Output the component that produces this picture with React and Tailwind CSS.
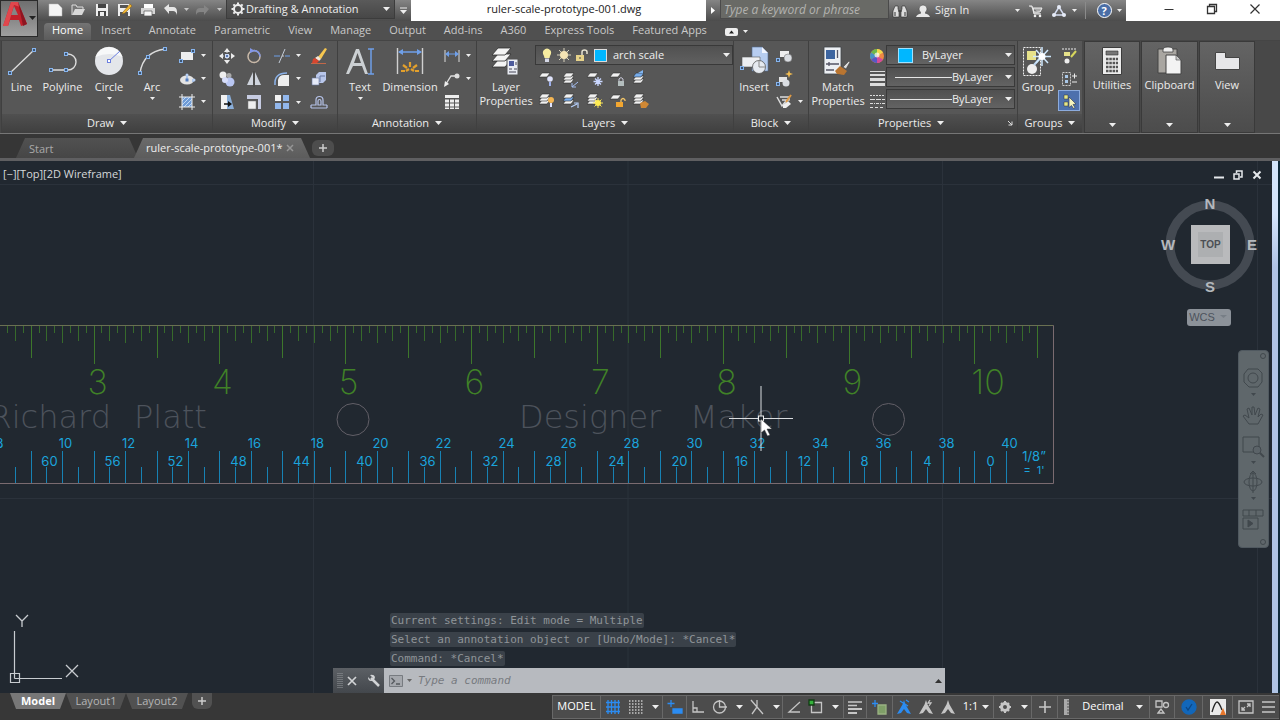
import React from "react";

const BLUE = "#6f9fe8";

function Icon({ s = 18, w, h, children, className = "" }) {
  return (
    <svg width={w || s} height={h || s} viewBox={`0 0 ${w || s} ${h || s}`} fill="none" className={`shrink-0 ${className}`} aria-hidden="true">
      {children}
    </svg>
  );
}

function Caret({ small, className = "" }) {
  return small ? (
    <svg width="5" height="3" viewBox="0 0 5 3" className={`shrink-0 ${className}`} aria-hidden="true"><path d="M0 0h5L2.500 3z" fill="#eee" /></svg>
  ) : (
    <svg width="7" height="4" viewBox="0 0 7 4" className={`shrink-0 ${className}`} aria-hidden="true"><path d="M0 0h7L3.500 4z" fill="#eee" /></svg>
  );
}

function Node({ x, y }) {
  return <rect x={x - 1.5} y={y - 1.5} width="3" height="3" fill="#3d5674" stroke="#86b4ee" />;
}

function Big({ label, children, className, caret }) {
  return (
    <button className={`flex shrink-0 flex-col items-center pt-px text-center ${className}`}>
      <Icon s={32}>{children}</Icon>
      <span className="mt-[3px] leading-[14px]">{label}</span>
      {caret && <Caret small className="mt-[3px]" />}
    </button>
  );
}

function Small({ label, caret, children, className = "" }) {
  return (
    <button aria-label={label} className={`flex h-[23px] items-center justify-center ${caret ? "gap-[5px]" : ""} ${className}`}>
      <Icon s={18}>{children}</Icon>
      {caret && <Caret small />}
    </button>
  );
}

function Panel({ title, className, children, launcher }) {
  return (
    <section className={`flex shrink-0 flex-col border-l border-[#404040] bg-[#575757] ${className}`}>
      <div className="flex h-[73px] pt-[3px]">{children}</div>
      <button className="flex h-[19px] w-full items-center justify-center gap-[6px] bg-linear-to-b from-[#505050] to-[#3f3f3f] pb-[2px] leading-4">
        {launcher && <span className="flex-1" />}
        <span>{title}</span>
        <Caret />
        {launcher && (
          <span className="flex flex-1 justify-end pr-1">
            <Icon s={6}><path d="M1 1l4 4M5 1.500V5H1.500" stroke="#ddd" /></Icon>
          </span>
        )}
      </button>
    </section>
  );
}

function Collapsed({ title, children, className }) {
  return (
    <button className={`flex h-[92px] shrink-0 flex-col items-center border border-[#3a3a3a] bg-linear-to-b from-[#646464] to-[#4c4c4c] ${className}`}>
      <Icon s={32} className="mt-[3px]">{children}</Icon>
      <span className="mt-px leading-[14px]">{title}</span>
      <Caret className="mt-auto mb-[5px]" />
    </button>
  );
}

function sheet(x, y, fill) {
  return <path d={`M${x + 3} ${y}h8l-3 4h-8z`} fill={fill || "#f2f2f2"} stroke="#2e2e2e" strokeWidth=".6" />;
}

function Stack({ top, mid, children }) {
  return (
    <>
      {sheet(1, 9)}
      {sheet(1, 6, mid)}
      {sheet(1, 3, top)}
      {children}
    </>
  );
}

function QuickAccess() {
  const items = [
    ["New", <path key="a" d="M2 3h9l4 4v8H2z" fill="#f4f4f4" stroke="#bbb" strokeWidth=".5" />],
    ["Open", <g key="a"><path d="M2 14V4h4l1 2h6v2" stroke="#ddd" fill="#777" /><path d="M2 14l3-6h10l-3 6z" fill="#d8d8d8" /></g>],
    ["Save", <g key="a"><path d="M3 3h12v12H3z" fill="#eee" /><path d="M5 3h8v4H5zM5 10h8v5H5z" fill="#444" /><path d="M7 11h4v4H7z" fill="#eee" /></g>],
    ["Save As", <g key="a"><path d="M2 3h12v12H2z" fill="#eee" /><path d="M4 4h8v3H4zM4 11h8v4H4z" fill="#555" /><path d="M7 11l7-8 2 2-7 7-3 1z" fill="#f0b632" stroke="#7a5512" strokeWidth=".5" /></g>],
    ["Plot", <g key="a"><path d="M5 3h9v4H5z" fill="#fff" /><path d="M2 7h14v6H2z" fill="#d6d6d6" /><path d="M5 10h8v5H5z" fill="#f7f7f7" stroke="#555" strokeWidth=".7" /></g>],
    ["Undo", <path key="a" d="M2 7l5-4v3h4q4 0 4 5v3q-1-4-4-4H7v3z" fill="#e6e6e6" />],
  ];
  return (
    <nav className="flex items-start pl-2">
      {items.map(([l, i]) => (
        <button key={l} aria-label={l} className="flex h-[19px] w-[23px] items-center justify-center pr-1">
          <Icon s={18}>{i}</Icon>
        </button>
      ))}
      <Caret small className="mt-2 opacity-70" />
      <button aria-label="Redo" className="flex h-[19px] w-7 items-center justify-center"><Icon s={16}><path d="M14 7L9 3v3H5q-4 0-4 5v2q1-3 4-3h4v3z" fill="#858585" /></Icon></button>
      <Caret small className="mt-2 opacity-70" />
    </nav>
  );
}

function TitleBar() {
  return (
    <header className="flex h-[21px] items-stretch bg-linear-to-b from-[#858585] to-[#4c4c4c]">
      <QuickAccess />
      <div className="ml-1 flex h-[19px] w-[169px] items-center border border-t-0 border-[#3c3c3c] bg-linear-to-b from-[#5a5a5a] to-[#474747] pr-1 pl-1">
        <Icon s={14}>
          <circle cx="7" cy="7" r="4" stroke="#eee" strokeWidth="2" />
          <path d="M7 .500v2M7 11.500v2M.500 7h2M11.500 7h2M2.400 2.400l1.400 1.400M10.200 10.200l1.400 1.400M2.400 11.600l1.400-1.400M10.200 3.800l1.400-1.400" stroke="#eee" strokeWidth="2" />
        </Icon>
        <select aria-label="Workspace" className="min-w-0 flex-1 appearance-none bg-transparent pl-px text-[#eee] outline-none">
          <option>Drafting &amp; Annotation</option>
        </select>
        <Caret />
      </div>
      <button aria-label="Customize quick access" className="flex w-4 items-center justify-center">
        <Icon w={7} h={8}><path d="M0 1h7" stroke="#eee" /><path d="M0 3h7L3.500 7z" fill="#eee" /></Icon>
      </button>
      <h1 className="flex-1 bg-white pl-[11px] text-center leading-[18px] text-[#222]">ruler-scale-prototype-001.dwg</h1>
      <button aria-label="Expand search" className="flex w-[14px] items-center justify-center"><Icon w={4} h={7}><path d="M0 0l4 3.500L0 7z" fill="#fff" /></Icon></button>
      <input aria-label="Search" placeholder="Type a keyword or phrase" className="h-[19px] w-[169px] border border-t-0 border-[#4a4a4a] bg-[#696a66] px-[3px] text-[12px] italic text-white outline-none placeholder:text-[#b3b3b0]" />
      <button aria-label="Find" className="flex w-[22px] items-center justify-center">
        <Icon s={16}><path d="M3 3h3v3l1 2v6H1V8zM10 3h3l2 5v6H9V8l1-2z" fill="#ddd" stroke="#2c2c2c" strokeWidth=".6" /><path d="M6 8h4M3 9v4M13 9v4" stroke="#333" /></Icon>
      </button>
      <button className="flex w-[104px] items-center gap-[4px] pl-1 text-[#ececec]">
        <Icon s={16}><circle cx="8" cy="6" r="4" fill="#e8e8e8" stroke="#333" strokeWidth=".5" /><path d="M1 14q1-3 5-3.500V9h4v1.500q4 .500 5 3.500z" fill="#e8e8e8" /></Icon>
        Sign In
      </button>
      <button aria-label="Account menu" className="flex w-2 items-center"><Caret small /></button>
      <button aria-label="Store" className="flex w-[26px] items-center justify-center"><Icon s={16}><path d="M1 3h3l2 8h7M5 5h9l-2 4H6z" stroke="#eee" fill="#aaa" /><circle cx="7" cy="13" r="1.300" fill="#eee" /><circle cx="12" cy="13" r="1.300" fill="#eee" /></Icon></button>
      <button aria-label="A360" className="flex w-[30px] items-center justify-center gap-[5px]"><Icon s={16}><path d="M8 4L3 12h10z" stroke="#d4dcf0" strokeWidth="1.500" /><circle cx="8" cy="4" r="2" fill="#e6ebf7" /><circle cx="3" cy="12" r="2" fill="#e6ebf7" /><circle cx="13" cy="12" r="2" fill="#e6ebf7" /></Icon><Caret small /></button>
      <span className="mx-[6px] my-[2px] w-px bg-[#8b8b8b]" />
      <button aria-label="Help" className="flex w-[34px] items-center justify-center gap-[5px]">
        <span className="flex size-[15px] items-center justify-center rounded-full border border-white bg-[#4a6ea6] text-[11px] leading-none font-bold text-white">?</span><Caret small />
      </button>
      <div className="flex w-[154px] items-center bg-white pr-1 pb-[3px] pl-[22px] text-[#333]">
        <button aria-label="Minimize" className="flex w-[43px] justify-center"><Icon s={12}><path d="M1.500 6.500h9" stroke="currentColor" /></Icon></button>
        <button aria-label="Restore" className="flex w-[43px] justify-center"><Icon s={12}><path d="M1.500 3.500h7v7h-7zM3.500 3V1.500h7v7H9" stroke="currentColor" strokeWidth="1.300" /></Icon></button>
        <button aria-label="Close" className="flex w-[43px] justify-center"><Icon s={12}><path d="M1.500 1.500l9 9M10.500 1.500l-9 9" stroke="currentColor" strokeWidth="1.200" /></Icon></button>
      </div>
    </header>
  );
}

const TABS = ["Home", "Insert", "Annotate", "Parametric", "View", "Manage", "Output", "Add-ins", "A360", "Express Tools", "Featured Apps"];

function RibbonTabs() {
  return (
    <nav className="flex h-[19px] items-end gap-[2px] pl-[6px]">
      {TABS.map((t) => (
        <button key={t} className={`flex h-[17px] items-start px-2 leading-[14px] ${t === "Home" ? "rounded-t-sm bg-linear-to-b from-[#747474] to-[#5b5b5b] text-white" : "text-[#c9c9c9]"}`}>{t}</button>
      ))}
      <button aria-label="Minimize ribbon" className="ml-2 flex h-[17px] items-center gap-[5px]">
        <Icon w={13} h={8}><rect width="13" height="8" rx="2" fill="#eee" /><path d="M4 5.500h5L6.500 2.500z" fill="#222" /></Icon><Caret small />
      </button>
    </nav>
  );
}

function DrawPanel() {
  return (
    <Panel title="Draw" className="w-[211px]">
      <Big label="Line" className="w-[39px]"><path d="M4 28L28 5" stroke="#ddd" strokeWidth="1.300" /><Node x={4} y={28} /><Node x={28} y={5} /></Big>
      <Big label="Polyline" className="w-[43px]"><path d="M4 25h17a8 8 0 0 0 0-16h-2" stroke="#ddd" strokeWidth="1.400" /><Node x={4} y={25} /><Node x={19} y={25} /><Node x={19} y={9} /></Big>
      <Big label="Circle" caret className="w-[50px]"><circle cx="16" cy="16" r="14" fill="#e4e6ea" /><path d="M2.500 12a14 14 0 0 1 27 0q-13-6-27 0z" fill="#fff" opacity=".7" /><path d="M16 16L27 6" stroke="#6b7fe0" /><rect x="14.500" y="14.500" width="3" height="3" fill="#fff" stroke="#6b7fe0" /></Big>
      <Big label="Arc" caret className="w-[36px]"><path d="M4 28Q7 7 29 4" stroke="#ddd" strokeWidth="1.400" /><Node x={4} y={28} /><Node x={12} y={12} /><Node x={29} y={4} /></Big>
      <div className="ml-1 w-[36px]">
        <Small label="Rectangle" caret className="w-full"><path d="M3 5h12v8H3z" fill="#eee" /><Node x={3} y={14} /><Node x={15} y={4} /></Small>
        <Small label="Ellipse" caret className="w-full"><ellipse cx="9" cy="10" rx="7" ry="4.500" fill="#e4e4e4" /><path d="M9 4v5M15 9v3" stroke={BLUE} /><rect x="7.500" y="8.500" width="3" height="3" fill="#547ec0" /><circle cx="9" cy="5" r="1.500" fill="#b7d0f5" /><circle cx="16" cy="10" r="1.500" fill="#b7d0f5" /></Small>
        <Small label="Hatch" caret className="w-full"><path d="M4 4h10v10H4z" fill="#6e9bd6" /><path d="M4 8l4-4M4 12l8-8M6 14l8-8M10 14l4-4" stroke="#d6e6fa" strokeWidth=".8" /><path d="M4 1v16M14 1v16M1 4h16M1 14h16" stroke="#eee" /></Small>
      </div>
    </Panel>
  );
}

function ModifyPanel() {
  return (
    <Panel title="Modify" className="w-[125px]">
      <div className="grid grid-cols-[27px_27px_40px_24px]">
        <Small label="Move"><path d="M9 1l3 4H6zM9 17l3-4H6zM1 9l4-3v6zM17 9l-4-3v6z" fill="#eee" /><path d="M9 4v10M4 9h10" stroke="#ddd" strokeDasharray="2 1" /><rect x="7.500" y="7.500" width="3" height="3" fill="#5b79b3" stroke="#cddcf7" /></Small>
        <Small label="Rotate"><circle cx="9" cy="9.500" r="6" stroke="#c9b9a8" strokeWidth="1.500" /><path d="M9 3.500a6 6 0 0 1 6 6" stroke="#7d94e8" strokeWidth="1.500" /><path d="M5 1v5l5-2z" fill="#8297e8" /></Small>
        <Small label="Trim" caret><path d="M1 9h6M12 9h5" stroke={BLUE} strokeWidth="1.200" /><path d="M6 16L12 2" stroke="#c3ccd8" /><path d="M9 9h2" stroke="#ccc" /></Small>
        <Small label="Erase"><path d="M8 10l7-9 2 1-6 10z" fill="#f6c64f" /><path d="M5 11l3-2 3 3-2 2z" fill="#f1e7da" /><path d="M3 12l2-1 4 3-2 2H2z" fill="#d8452f" /><path d="M1 16.500h15" stroke="#c26748" /></Small>
        <Small label="Copy"><circle cx="5" cy="5" r="3.500" fill="#eee" /><circle cx="11" cy="5.500" r="2.500" fill="#aaa" /><circle cx="12" cy="12" r="4.500" fill="#b9c6f2" /><circle cx="7" cy="10" r="3" fill="#d8defa" /></Small>
        <Small label="Mirror"><path d="M8 2v13H2zM10 2v13h6z" fill="#cfd4dd" /><path d="M9 1v16" stroke="#444" /></Small>
        <Small label="Fillet" caret><path d="M5 16V10q1-5 6-5h5v11z" fill="#eee" /><path d="M2 15Q1 3 14 3" stroke="#8cb3ea" strokeWidth="1.500" /></Small>
        <Small label="Explode"><path d="M6 5l3-3h7v8l-3 3H6z" fill="#b8c6ea" /><path d="M2 8h7v7H2z" fill="#e5eaf8" stroke="#66759d" strokeWidth=".6" /><path d="M10 6h5M10 6v6" stroke="#67769f" /></Small>
        <Small label="Stretch"><path d="M3 2h6v14H3z" fill="#f2f2f2" /><path d="M9 2h3l4 14H9z" fill="#8aaed8" /><path d="M6 11h5" stroke="#111" strokeWidth="1.500" /><path d="M10 8l4 3-4 3z" fill="#111" /></Small>
        <Small label="Scale"><path d="M2 2h14v14h-3V6H2z" fill="#c7cce2" /><path d="M3 8h8v8H3z" fill="#eee" stroke="#777" strokeWidth=".5" /></Small>
        <Small label="Array" caret><path d="M2 2h6v6H2z" fill="#f2f2f2" /><path d="M10 2h6v6h-6zM2 10h6v6H2zM10 10h6v6h-6z" fill="#92b7ec" /></Small>
        <Small label="Offset"><path d="M1 15h16M1 12h5V7a3.500 3.500 0 0 1 7 0v5h4M1 12v3M17 12v3M8 12V8a1 1 0 0 1 3 0v4z" stroke="#b6c3ea" strokeWidth="1.200" /></Small>
      </div>
    </Panel>
  );
}

function AnnotationPanel() {
  return (
    <Panel title="Annotation" className="w-[139px]">
      <Big label="Text" caret className="w-[44px]"><path d="M2 29L12 4h3l9 25h-3l-3-8H9l-4 8zM10 18h7L13.500 8z" fill="#ccd0d3" /><path d="M24 4h6M24 29h6M27 4v25" stroke={BLUE} strokeWidth="1.500" /></Big>
      <Big label="Dimension" className="w-[56px]"><path d="M3.500 3v26M28.500 3v26" stroke="#d0d0d0" strokeWidth="1.400" /><path d="M5 7h22" stroke={BLUE} strokeWidth="1.500" /><path d="M4 7l5-3v6zM28 7l-5-3v6z" fill={BLUE} /><path d="M7 26h4M21 26h4M9 20l4 3M23 20l-4 3M16 17v5M12 26l3-2M20 26l-3-2" stroke="#e3a02c" strokeWidth="2.200" /></Big>
      <div className="w-[38px]">
        <Small label="Linear" caret className="w-full"><path d="M2 3v12M16 3v12" stroke="#ddd" /><path d="M4 7h10" stroke={BLUE} /><path d="M2 7l4-3v6zM16 7l-4-3v6z" fill={BLUE} /></Small>
        <Small label="Leader" caret className="w-full"><path d="M3 14L8 6h5" stroke="#ddd" strokeWidth="1.300" /><path d="M1 17l1-6 4 3z" fill="#eee" /><circle cx="14" cy="6" r="2.500" fill="#ddd" /></Small>
        <Small label="Table" className="w-[28px]"><path d="M2 2h14v3H2zM2 6.500h4v3H2zM7 6.500h4v3H7zM12 6.500h4v3h-4zM2 10.500h4v3H2zM7 10.500h4v3H7zM12 10.500h4v3h-4zM2 14.500h4V16H2zM7 14.500h4V16H7zM12 14.500h4V16h-4z" fill="#eee" /></Small>
      </div>
    </Panel>
  );
}

function LayersPanel() {
  return (
    <Panel title="Layers" className="w-[257px]">
      <Big label={<>Layer<br />Properties</>} className="w-[58px]">
        {[17, 11, 5].map((y) => <path key={y} d={`M8 ${y - 2}h13l-6 7H2z`} fill="#f4f4f4" stroke="#2e2e2e" strokeWidth=".8" />)}
        <path d="M17 14h11v16H17z" fill="#e8ebf2" stroke="#555" /><path d="M19 16h5v5h-5z" fill="#4c5a9c" /><path d="M26 17v3M19 24h3M24 24h3M19 27h7" stroke="#445" />
      </Big>
      <div className="flex flex-1 flex-col">
        <div className="mt-px flex h-5 items-center border border-[#393939] bg-linear-to-b from-[#515151] to-[#606060] pr-[2px] pl-[3px]">
          <Icon s={16}><path d="M5 9Q3 6 4.500 3.500 8-.5 11.500 3.500 13 6 11 9l-.5 2h-5z" fill="#f8eda0" /><path d="M6 11.500h4V15H6z" fill="#d6d9e8" /></Icon>
          <Icon w={18} h={18}><path d="M9 2v14M2 9h14M4 4l10 10M14 4L4 14" stroke="#d8d2bc" strokeWidth="1" /><circle cx="9" cy="9" r="4" fill="#f5e4b4" /></Icon>
          <Icon w={18} h={16}><path d="M3 8h8v6H3z" fill="#e6d289" /><path d="M9 8V5q0-2 2.500-2T14 5v2" stroke="#e6e2d2" strokeWidth="1.500" /><path d="M7 10v2" stroke="#444" /></Icon>
          <span className="ml-[3px] size-[13px] border border-[#dcdcdc] bg-[#00b7ff]" />
          <select aria-label="Layer" className="min-w-0 flex-1 appearance-none bg-transparent pl-[6px] text-[#eee] outline-none"><option>arch scale</option></select>
          <Caret />
        </div>
        <div className="grid grid-cols-[23px_23px_23px_22px_22px] gap-x-px pt-[2px]">
          <Small label="Off">{sheet(1, 3)}<circle cx="12" cy="9" r="2.800" fill="#dfe3fb" /><path d="M12 12v4" stroke="#9eb0ed" strokeWidth="2" /></Small>
          <Small label="Isolate"><Stack><path d="M10 17l6-5M10 13v4h4" stroke="#a7c0f2" /></Stack></Small>
          <Small label="Freeze">{sheet(1, 3)}<path d="M12 7v9M7.500 11.500h9M9 8.500l6 6M15 8.500l-6 6" stroke="#cad7ff" strokeWidth="1.300" /></Small>
          <Small label="Lock">{sheet(1, 3)}<path d="M9 11h6v5H9z" fill="#b4bebe" /><path d="M10 11V9q2-3 4 0v2" stroke="#ccd" /></Small>
          <Small label="Make current"><Stack top="#76aceb"><path d="M6 3l5-3v3" fill="#82b6f2" /></Stack></Small>
          <Small label="Turn all on" className="-mt-[2px]"><Stack><circle cx="13" cy="9" r="3" fill="#f4b653" /><path d="M13 12v4" stroke="#dfe3ff" strokeWidth="2" /></Stack></Small>
          <Small label="Unisolate" className="-mt-[2px]"><Stack mid="#7bb0f0"><path d="M9 16l6-3M12 12h4v5" stroke="#b6cffb" strokeWidth="1.200" /></Stack></Small>
          <Small label="Thaw" className="-mt-[2px]"><Stack><path d="M12 7v10M7 12h10M8.500 8.500l7 7M15.500 8.500l-7 7" stroke="#f5e05c" /><circle cx="12" cy="12" r="3" fill="#ffec52" /></Stack></Small>
          <Small label="Unlock" className="-mt-[2px]">{sheet(1, 4)}<path d="M7 11h7v5H7z" fill="#f2a630" /><path d="M12 11V9q2-3 4 0v1" stroke="#f4c668" strokeWidth="1.300" /></Small>
          <Small label="Match layer" className="-mt-[2px]"><Stack><path d="M8 12l5-2 4 3-3 4-5 0z" fill="#d08834" /></Stack></Small>
        </div>
      </div>
    </Panel>
  );
}

function BlockPanel() {
  return (
    <Panel title="Block" className="w-[75px]">
      <Big label="Insert" className="w-[40px]"><path d="M14 2h10l6 6v18H14z" fill="#b7cdf0" stroke="#52688e" strokeWidth=".6" /><path d="M24 2v6h6" fill="#f1f5ff" /><path d="M4 12h18v10H4z" fill="#edeff2" stroke="#555" strokeWidth=".6" /><circle cx="21" cy="22" r="6.500" fill="#e6eaf0" stroke="#555" strokeWidth=".8" /><path d="M21 15v7h7" stroke="#888" /><Node x={4} y={23} /></Big>
      <div className="w-[32px]">
        <Small label="Create block" className="w-5"><path d="M5 4h9v6H5z" fill="#eee" /><circle cx="13" cy="11" r="4" fill="#dadde2" stroke="#666" strokeWidth=".5" /><Node x={3} y={13} /></Small>
        <Small label="Edit block" className="w-5"><path d="M4 7h8v5H4z" fill="#e4e4e4" /><circle cx="11" cy="13" r="3.500" fill="#dadde2" /><path d="M14 0l1 3 3 1-3 1-1 3-1-3-3-1 3-1z" fill="#f4bd50" /><Node x={3} y={14} /></Small>
        <Small label="Edit attributes" caret className="w-[29px]"><path d="M2 4l5 9 4-5M5 4h9v3H7" stroke="#ddd" strokeWidth="1.500" /><path d="M8 12l5-4 3 3-5 4H8z" fill="#eee" /><path d="M11 9l5-7" stroke="#e09a44" strokeWidth="2" /></Small>
      </div>
    </Panel>
  );
}

function PropertyRow({ label, kind }) {
  return (
    <div className="flex h-5 items-center border border-[#393939] bg-linear-to-b from-[#505050] to-[#636363] pr-[2px]">
      {kind === "color" ? <span className="ml-[11px] size-[15px] border border-[#9ee1ff] bg-[#00b7ff]" /> : <span className={`h-px bg-[#e5e5e5] ${kind === "weight" ? "ml-[8px] w-[57px]" : "ml-[3px] w-[62px]"}`} />}
      <select aria-label={label} className={`min-w-0 flex-1 appearance-none bg-transparent text-[#eee] outline-none ${kind === "color" ? "pl-[9px]" : ""}`}><option>ByLayer</option></select>
      <Caret />
    </div>
  );
}

function PropertiesPanel() {
  return (
    <Panel title="Properties" launcher className="w-[209px]">
      <Big label={<>Match<br />Properties</>} className="w-[58px]">
        <path d="M2 2h17v27H2z" fill="#edf0f4" stroke="#3f444a" strokeWidth=".8" /><path d="M4 5h9v9H4z" fill="#3d65a0" /><path d="M15.500 5v8M4 19h13M7 17v4M4 25h8" stroke="#556" strokeWidth="1.300" />
        <path d="M13 26l5-5 7 5-3 4-7-1z" fill="#b97531" /><path d="M21 22l6-6 1 1-4 7z" fill="#ddd" stroke="#333" strokeWidth=".5" />
      </Big>
      <div className="flex w-[19px] flex-col items-center">
        <Small label="Color"><circle cx="9" cy="9" r="7" fill="#e84" /><path d="M9 9V2a7 7 0 0 1 6 3.500z" fill="#f0d94a" /><path d="M9 9V2a7 7 0 0 0-6 3.500z" fill="#6cb84b" /><path d="M9 9L3 5.500a7 7 0 0 0 0 7z" fill="#4692c5" /><path d="M9 9l-6 3.500A7 7 0 0 0 9 16z" fill="#5858c5" /><path d="M9 9v7a7 7 0 0 0 6-3.500z" fill="#d34b9c" /><circle cx="9" cy="8" r="2.500" fill="#fff" opacity=".7" /></Small>
        <Small label="Lineweight"><path d="M2 1.500h15" stroke="#ddd" /><path d="M2 5h15" stroke="#ddd" strokeWidth="2" /><path d="M2 9.500h15" stroke="#ddd" strokeWidth="3" /><path d="M2 14.500h15" stroke="#ddd" strokeWidth="3" /></Small>
        <Small label="Linetype"><path d="M2 2.500h15" stroke="#ddd" strokeDasharray="2 1" /><path d="M2 6.500h15" stroke="#ddd" strokeDasharray="5 1" /><path d="M2 10.500h15" stroke="#ddd" strokeDasharray="3 1 1 1" /><path d="M2 14.500h15" stroke="#ddd" strokeDasharray="3 2" /></Small>
      </div>
      <div className="mr-[2px] flex flex-1 flex-col gap-[2px] pt-px">
        <PropertyRow label="Object color" kind="color" />
        <PropertyRow label="Lineweight" kind="weight" />
        <PropertyRow label="Linetype" kind="type" />
      </div>
    </Panel>
  );
}

function GroupsPanel() {
  return (
    <Panel title="Groups" className="w-[65px]">
      <Big label="Group" className="w-[40px]">
        <path d="M1.500 2.500h17v28h-17z" stroke="#eee" strokeDasharray="2 1" /><path d="M5 6h9v9H5z" fill="#e6e28a" /><circle cx="10" cy="24" r="5" fill="#eee" /><path d="M12 20l7-8" stroke="#bcd6f0" strokeWidth="2" /><path d="M20 2v19M11 11.500h18M14 5l12 13M26 5L14 18" stroke="#cfe9ff" strokeWidth="1.500" /><circle cx="20" cy="11.500" r="3.500" fill="#fff" />
      </Big>
      <div className="flex flex-col">
        <Small label="Ungroup" className="w-[22px]"><path d="M2 2h14" stroke="#eee" strokeDasharray="2 1" /><path d="M4 5h6v4H4z" fill="#e6e28a" /><circle cx="7" cy="14" r="2.500" fill="#eee" /><path d="M11 10l5-6" stroke="#d7d65c" strokeWidth="2" /></Small>
        <Small label="Group edit" className="w-[22px]"><path d="M2.500 2.500h8v13h-8z" stroke="#ccc" strokeDasharray="2 1" /><path d="M5 5h3v3H5zM5 10h3v3H5z" fill="#a9c7e8" /><path d="M12 6h5M14.500 3.500v5M12 12h5" stroke="#eee" /></Small>
        <button aria-label="Group selection on" className="flex h-[21px] w-[22px] items-center justify-center border border-[#8cabdd] bg-[#4d70ad]"><Icon s={18}><path d="M4 3h4v4H4zM4 10h4v4H4z" fill="#e4e68b" stroke="#333" strokeWidth=".5" /><path d="M9 5l7 7-3 .500 2 3-1.500 1-2-3-2.500 2z" fill="#f4f3bd" stroke="#28344a" strokeWidth=".6" /></Icon></button>
      </div>
    </Panel>
  );
}

function Ribbon() {
  return (
    <div className="flex border-t border-b border-t-[#454545] border-b-[#767676] bg-[#484848] pl-px text-[#ececec]">
      <DrawPanel />
      <ModifyPanel />
      <AnnotationPanel />
      <LayersPanel />
      <BlockPanel />
      <PropertiesPanel />
      <GroupsPanel />
      <div className="flex gap-px pl-[2px]">
        <Collapsed title="Utilities" className="w-[56px]"><path d="M6.500 2.500h19v27h-19z" fill="#ececec" stroke="#3c3c3c" /><path d="M10 6h12v4H10z" fill="#777" stroke="#333" strokeWidth=".6" />{[14, 18, 22, 26].map((y) => <path key={y} d={`M10 ${y}h12`} stroke="#555" strokeWidth="2.400" strokeDasharray="2.500 .8" />)}</Collapsed>
        <Collapsed title="Clipboard" className="w-[57px]"><path d="M4 4h19v24H4z" fill="#a9a6a1" stroke="#444" /><path d="M9 5q0-3 5-3t5 3v2H9z" fill="#eee" stroke="#333" strokeWidth=".7" /><path d="M12 10h10l5 5v14H12z" fill="#f3f3f3" stroke="#444" /><path d="M22 10v5h5z" fill="#ccc" stroke="#444" strokeWidth=".6" /></Collapsed>
        <Collapsed title="View" className="w-[56px]"><path d="M4.500 7.500h10v5h14v12h-24z" fill="#e6e6e8" stroke="#444" /></Collapsed>
      </div>
    </div>
  );
}

function FileTabs() {
  return (
    <nav className="flex h-[27px] items-end border-b-[3px] border-[#5f5f61] bg-[#363636] pl-4">
      <button className="h-5 w-[122px] rounded-t-md bg-linear-to-b from-[#515151] to-[#464646] pl-[13px] text-left leading-[19px] text-[#a9a9a9] [clip-path:polygon(9px_0,calc(100%-9px)_0,100%_100%,0_100%)]">Start</button>
      <div className="-ml-1 flex h-5 w-[176px] items-center rounded-t-md bg-linear-to-b from-[#6b6b6b] to-[#5c5c5c] pl-3 leading-[18px] text-[#eee] [clip-path:polygon(9px_0,calc(100%-9px)_0,100%_100%,0_100%)]">
        <button>ruler-scale-prototype-001*</button>
        <button aria-label="Close drawing" className="ml-auto pr-4"><Icon s={8}><path d="M1 1l6 6M7 1L1 7" stroke="#969696" strokeWidth="1.500" /></Icon></button>
      </div>
      <button aria-label="New drawing" className="mb-[2px] ml-[2px] flex h-4 w-[22px] items-center justify-center rounded-md bg-[#4d4d4d]"><Icon s={8}><path d="M4 0v8M0 4h8" stroke="#ccc" strokeWidth="1.500" /></Icon></button>
    </nav>
  );
}

const inch = (n) => Math.round(93.6 + 125.83 * (n - 3)) + 0.5;

function Ruler() {
  const green = [];
  for (let i = 36; i <= 168; i++) {
    const x = inch(i / 16);
    if (x < 0) continue;
    const end = i % 16 === 0 ? 364 : i % 8 === 0 ? 358 : i % 4 === 0 ? 343 : i % 2 === 0 ? 341 : 333;
    green.push(<path key={i} d={`M${x} 326V${end}`} stroke={i % 8 === 0 ? "#3d772b" : "#376a2b"} />);
  }
  const blue = [];
  for (let i = 18; i <= 82; i++) {
    const x = inch(i / 8);
    if (x < 0) continue;
    blue.push(<path key={i} d={`M${x} ${i % 2 === 0 ? 451 : 467}V483`} stroke="#1782b4" strokeWidth="1" />);
  }
  return (
    <g fontFamily="Inter, 'Open Sans', sans-serif">
      <path d="M0 325.500H1053.500V483.500H0" stroke="#7a6b70" fill="none" />
      <path d="M0 325.500H1053" stroke="#6a7052" />
      {green}
      {blue}
      <g fontSize="34" fontWeight="200" fill="#408227" textAnchor="middle">
        {[3, 4, 5, 6, 7, 8, 9].map((n) => <text key={n} x={inch(n) + 3} y="394">{n}</text>)}
        <text x="988" y="394">10</text>
      </g>
      <g fontSize="32" fontWeight="200" fill="#4d535c" fontFamily="'DejaVu Sans', sans-serif">
        <text x="111" y="428" textAnchor="end">Richard</text>
        <text x="134" y="428">Platt</text>
        <text x="519" y="428">Designer</text>
        <text x="690" y="428">Maker</text>
      </g>
      <circle cx="353" cy="419.500" r="16" stroke="#625f67" fill="none" />
      <circle cx="888.500" cy="419.500" r="16" stroke="#625f67" fill="none" />
      <g fontSize="13" fill="#1ba4dc" textAnchor="middle">
        {Array.from({ length: 17 }, (_, k) => 8 + 2 * k).map((v) => <text key={v} x={inch(2.25 + (v - 8) / 4) + (v > 8 ? 3 : 0)} y="448">{v}</text>)}
        {Array.from({ length: 16 }, (_, k) => 60 - 4 * k).map((v) => <text key={v} x={inch(2.625 + (60 - v) / 8) + (v > 9 ? 3 : 0)} y="466">{v}</text>)}
        <text x="1034" y="461">1/8”</text>
        <text x="1034" y="474" fontSize="11">= &#160;1'</text>
      </g>
    </g>
  );
}

function ViewCube() {
  return (
    <svg width="100" height="132" viewBox="0 0 100 132" className="absolute top-[34px] right-[18px]" fontFamily="'Liberation Sans', sans-serif" fontWeight="bold" textAnchor="middle">
      <circle cx="50" cy="50" r="40" fill="none" stroke="#444a52" strokeWidth="9" />
      <path d="M31 30h39v39H31z" fill="#b9babc" />
      <path d="M38 37h25v25H38z" fill="#adafb1" />
      <text x="50.500" y="53" fontSize="10" fill="#4b4f55">TOP</text>
      <g fontSize="15" fill="#b4b8bd"><text x="50" y="14">N</text><text x="50" y="97">S</text><text x="8" y="55">W</text><text x="92" y="55">E</text></g>
      <rect x="27" y="114" width="44" height="17" rx="3" fill="#8c9299" />
      <text x="42" y="126" fontSize="11" fontWeight="normal" fill="#4c535c">WCS</text>
      <path d="M60 120h7l-3.500 3z" fill="#777e86" />
    </svg>
  );
}

function NavBar() {
  const items = [
    ["Steering wheel", <g key="a"><path d="M6 2h10l4 4v9l-4 5H7l-5-5V7z" /><circle cx="11" cy="11" r="5" /></g>],
    ["Pan", <path key="a" d="M7 20l-6-8 2-1 4 3-2-9 2-1 3 7V3h2l1 8 3-7 2 1-2 8 3-3 2 1-5 9z" />],
    ["Zoom", <g key="a"><path d="M1 2h16v15H1z" /><circle cx="15" cy="15" r="4" fill="#5b6368" /><path d="M18 18l4 4" strokeWidth="2" /></g>],
    ["Orbit", <g key="a"><ellipse cx="11" cy="11" rx="9" ry="4" /><ellipse cx="11" cy="11" rx="4" ry="9" /><path d="M11 0v22M8 3l3-3 3 3" /></g>],
    ["ShowMotion", <g key="a"><path d="M1 2h20v6H1zM7 2v6M14 2v6M1 10h15v11H1z" /><path d="M6 12l5 3.500L6 19z" fill="#41484d" /></g>],
  ];
  return (
    <div className="absolute top-[189px] right-[9px] flex h-[198px] w-[31px] flex-col items-center justify-between rounded-sm border border-[#505960] bg-[#5f676b] pt-4 pb-4 text-[#41484d]">
      {items.map(([l, i]) => (
        <button key={l} aria-label={l} className="flex flex-col items-center gap-[3px]">
          <Icon s={23}><g stroke="currentColor">{i}</g></Icon>
          {l !== "Pan" && l !== "ShowMotion" && <svg width="5" height="3" viewBox="0 0 5 3" aria-hidden="true"><path d="M0 0h5L2.500 3z" fill="currentColor" /></svg>}
        </button>
      ))}
      <span className="absolute top-[2px] right-[2px] size-[6px] rounded-full border border-[#41484d]" />
      <span className="absolute right-[2px] bottom-[2px] size-[6px] rounded-full border border-[#41484d]" />
    </div>
  );
}

function CommandLine() {
  return (
    <div className="absolute bottom-0 left-[333px] w-[612px] font-['DejaVu_Sans_Mono',monospace] text-[11px]">
      <div className="flex flex-col items-start gap-[4px] pb-[2px] pl-[57px] leading-[15px] text-[#8f9498]">
        {["Current settings: Edit mode = Multiple", "Select an annotation object or [Undo/Mode]: *Cancel*", "Command: *Cancel*"].map((t) => (
          <p key={t} className="rounded-xs bg-[#3a4149] px-px">{t}</p>
        ))}
      </div>
      <div className="flex h-[25px] items-center bg-[#b7babf]">
        <div className="flex h-full w-[51px] items-center bg-linear-to-b from-[#5c6065] to-[#43474c] pl-1">
          <Icon w={6} h={16}><path d="M1 0v16M3 0v16M5 0v16" stroke="#969a9e" strokeDasharray="1 1" /></Icon>
          <button aria-label="Close command line" className="ml-1"><Icon s={10}><path d="M1 1l8 8M9 1L1 9" stroke="#d2d4d6" strokeWidth="1.700" /></Icon></button>
          <button aria-label="Customize" className="ml-[10px]"><Icon s={14}><path d="M4 4l8 8" stroke="#d2d4d6" strokeWidth="2.500" /><path d="M1 3l3 3 2-2-3-3q4-1 5 2-.5 4-4 4Q1 7 1 3z" fill="#d2d4d6" /></Icon></button>
        </div>
        <button aria-label="Recent commands" className="ml-[5px] flex items-center gap-1">
          <Icon w={14} h={12}><path d="M.500.500h13v11H.500z" stroke="#777b80" fill="#a5a8ad" /><path d="M2.500 3l3 3-3 3M7 9h4" stroke="#55595e" strokeWidth="1.300" /></Icon>
          <svg width="5" height="3" viewBox="0 0 5 3" aria-hidden="true"><path d="M0 0h5L2.500 3z" fill="#666" /></svg>
        </button>
        <input aria-label="Command" placeholder="Type a command" className="h-full min-w-0 flex-1 bg-transparent pl-[6px] text-[11px] italic text-[#333] outline-none placeholder:text-[#777a7f]" />
        <button aria-label="Command history" className="flex w-[13px] justify-center"><svg width="7" height="4" viewBox="0 0 7 4" aria-hidden="true"><path d="M0 4h7L3.500 0z" fill="#333" /></svg></button>
      </div>
    </div>
  );
}

function Canvas() {
  return (
    <main className="relative min-h-[400px] flex-1 overflow-hidden border-r-2 border-[#0f2a3a] bg-[#212830]">
      <svg width="100%" height="100%" className="absolute inset-0" fill="none">
        <g transform="translate(0 -161)">
          <path d="M313.500 161v540M628 161v540M942.500 161v540M1257.500 161v540M0 184.500h1272M0 498.500h1272" stroke="#2b323b" />
          <Ruler />
          <path d="M761 386v65M729 418.500h64" stroke="#dadde0" />
          <rect x="758.500" y="416" width="5" height="5" fill="#212830" stroke="#eee" />
          <path d="M761 419v14l3.500-3 3 6 2.500-1-3-6h5z" fill="#fff" stroke="#333" strokeWidth=".5" />
        </g>
      </svg>
      <div className="absolute top-[6px] left-[3px] flex leading-[14px] text-[#d5d8da]"><button>[−]</button><button>[Top]</button><button>[2D Wireframe]</button></div>
      <div className="absolute top-[9px] right-[16px] flex gap-[9px]">
        <button aria-label="Minimize view"><Icon s={10}><path d="M0 7.500h10" stroke="#e6e9ec" strokeWidth="2" /></Icon></button>
        <button aria-label="Restore view"><Icon s={10}><path d="M1 4h5v5H1zM3.500 3V1H9v6H7" stroke="#e6e9ec" strokeWidth="1.500" /></Icon></button>
        <button aria-label="Close view"><Icon s={10}><path d="M1.500 1.500l7 7M8.500 1.500l-7 7" stroke="#e6e9ec" strokeWidth="2" /></Icon></button>
      </div>
      <ViewCube />
      <NavBar />
      <div className="absolute top-0 right-0 bottom-0 w-[6px] bg-linear-to-b from-[#d3e4fb] from-10% to-[#afc3e4] to-20%" />
      <svg width="90" height="80" viewBox="0 0 90 80" fill="none" className="absolute bottom-[4px] left-0" stroke="#c8ccd0" aria-hidden="true">
        <path d="M14.500 64V22M14.500 69.500H62M10.500 64.500h9v9h-9zM14.500 64v5.500" strokeWidth="1.200" />
        <path d="M16 6l6 6 6-6M22 12v6M66 56l12 12M78 56L66 68" strokeWidth="1.300" />
      </svg>
      <CommandLine />
    </main>
  );
}

function Cell({ w, children, first, label, on }) {
  return (
    <button aria-label={label} className={`flex h-6 shrink-0 items-center justify-center gap-[8px] border-y border-[#686868] bg-[#4c4c4c] ${first ? "border-l" : ""} ${on ? "text-[#2b8cf2]" : "text-[#c5c5c5]"} ${w}`}>{children}</button>
  );
}

function S({ children }) {
  return <Icon s={16}><g stroke="currentColor" strokeWidth="1.300">{children}</g></Icon>;
}

const person = <path d="M8 1l1.500 4.500L15 15l-4-1-3-4-3 4-4 1 5.500-9.500z" fill="currentColor" stroke="none" />;

function StatusBar() {
  return (
    <footer className="flex h-[27px] items-center bg-[#373737] pr-px">
      <nav className="flex h-full items-start pl-[10px]">
        <button className="h-4 w-[56px] rounded-b-md bg-[#777] leading-[14px] font-bold text-white [clip-path:polygon(0_0,100%_0,calc(100%-6px)_100%,6px_100%)]">Model</button>
        <button className="h-4 w-[60px] rounded-b-md bg-[#515151] leading-[14px] text-[#b5b5b5] [clip-path:polygon(0_0,100%_0,calc(100%-6px)_100%,6px_100%)]">Layout1</button>
        <button className="h-4 w-[62px] rounded-b-md bg-[#515151] leading-[14px] text-[#b5b5b5] [clip-path:polygon(0_0,100%_0,calc(100%-6px)_100%,6px_100%)]">Layout2</button>
        <button aria-label="New layout" className="ml-1 flex h-4 w-5 items-center justify-center rounded-b-md bg-[#515151]"><Icon s={8}><path d="M4 0v8M0 4h8" stroke="#ccc" strokeWidth="1.500" /></Icon></button>
      </nav>
      <div className="ml-auto flex">
        <Cell first w="w-[48px]"><span className="text-[11px] text-white">MODEL</span></Cell>
        <Cell first on label="Grid" w="w-[24px]"><S><path d="M3 1v14M6.500 1v14M10 1v14M13.500 1v14M1 3.500h14M1 8h14M1 12.500h14" /></S></Cell>
        <Cell label="Snap" w="w-[38px]"><S>{[2, 5, 8, 11, 14].map((y) => <path key={y} d={`M1 ${y}h14`} strokeDasharray="1.500 1.500" />)}</S><Caret /></Cell>
        <Cell first on label="Dynamic input" w="w-[24px]"><S><path d="M4 1v7M.500 4.500h7" /><path d="M6 10h9v4H6z" fill="currentColor" /></S></Cell>
        <Cell first label="Ortho" w="w-[23px]"><S><path d="M3 2v11h11M3 9h4v4" /></S></Cell>
        <Cell label="Polar" w="w-[37px]"><S><circle cx="7.500" cy="8" r="6" /><path d="M7.500 1v7H15" /></S><Caret /></Cell>
        <Cell label="Isodraft" w="w-[36px]"><S><path d="M2 1l12 14M8 1v7L3 15" /></S><Caret /></Cell>
        <Cell first label="Object snap tracking" w="w-[22px]"><S><path d="M14 3L3 13h11" /></S></Cell>
        <Cell label="Object snap" w="w-[39px]"><S><path d="M3.500 3.500h10v10h-10z" /><path d="M1 1h5v5H1z" fill="#35b13b" stroke="#123b14" /></S><Caret /></Cell>
        <Cell first label="Lineweight" w="w-[23px]"><S><path d="M1 3h14M1 6.500h9" /><path d="M1 10h14M1 14h9" strokeWidth="2" /></S></Cell>
        <Cell first label="Cycling" w="w-[26px]"><S><path d="M3 1v7M0 4.500h6" stroke="#2b8cf2" /><path d="M6 6h8v9H6z" fill="#7f9f68" stroke="#9ab283" /></S></Cell>
        <Cell first on label="Annotation visibility" w="w-[23px]"><S>{person}<path d="M10 1l3 2M4 2l8 5" /></S></Cell>
        <Cell label="Auto scale" w="w-[22px]"><S>{person}<path d="M12 1l-2 3h3l-2 3" /></S></Cell>
        <Cell label="Annotation" w="w-[22px]"><S>{person}</S></Cell>
        <Cell w="w-[34px]"><span className="-mr-1 text-[11px] text-white">1:1</span><Caret /></Cell>
        <Cell first label="Settings" w="w-[38px]"><S><circle cx="8" cy="8" r="3.500" strokeWidth="3" /><path d="M8 2v3M8 11v3M2 8h3M11 8h3M4 4l2 2M10 10l2 2M12 4l-2 2M6 10l-2 2" strokeWidth="2" /></S><Caret /></Cell>
        <Cell first label="Annotation monitor" w="w-[26px]"><S><path d="M8 2v12M2 8h12" strokeWidth="1.600" /></S></Cell>
        <Cell first w="w-[92px]"><Icon w={6} h={16}><path d="M0 0h5v16H0z" fill="#aaa" /><path d="M3 2h2M3 5h2M3 8h2M3 11h2M3 14h2" stroke="#555" /></Icon><span className="px-1 text-[11px] text-white">Decimal</span><Caret /></Cell>
        <Cell first label="Quick properties" w="w-[25px]"><S><path d="M2 2h6v6H2z" /><circle cx="12" cy="6" r="2.500" /><path d="M4 14l3-4 3 4z" /></S></Cell>
        <Cell first on label="Graphics performance" w="w-[28px]"><S><circle cx="8" cy="8" r="7" fill="#1267ba" stroke="#1267ba" /><path d="M5 8l2 3 4-6" stroke="#0b4685" /></S></Cell>
        <Cell first label="Isolate objects" w="w-[30px]"><S><path d="M0 0h16v16H0z" fill="#e9e9e9" stroke="none" /><path d="M2 13Q5 3 7 3t5 8" stroke="#222" /><path d="M13 9l3 7h-6z" fill="#e7762b" stroke="none" /></S></Cell>
        <Cell first label="Clean screen" w="w-[26px]"><S><path d="M1 2h14v12H1zM4 11l3-3M12 5L9 8M9 5h3v3M4 8v3h3" /></S></Cell>
        <Cell label="Customization" w="w-[21px]"><S><path d="M1 3h13M1 8h13M1 13h13" strokeWidth="1.700" /></S></Cell>
      </div>
    </footer>
  );
}

export default function App() {
  return (
    <div className="flex min-h-screen flex-col overflow-hidden bg-[#505050] font-['Open_Sans','Noto_Sans',sans-serif] text-[11px]">
      <div className="flex h-10">
        <button aria-label="Application menu" className="flex h-[37px] w-[38px] shrink-0 items-center border border-[#2b2b2b] bg-linear-to-b from-[#6f6f6f] to-[#a0a0a0] pb-[10px] pl-px">
          <Icon w={26} h={28}>
            <path d="M1 26L9 2h7l9 22-6 2-2-6H8l-2 6z" fill="#c2202b" />
            <path d="M9 15l3-9 4 9z" fill="#858585" />
            <path d="M9 2h7l2 5-6-2-6 21H1z" fill="#e0474d" /><path d="M16 2l9 22-4 2z" fill="#8d1520" />
          </Icon>
          <svg width="7" height="4" viewBox="0 0 7 4" className="mt-2 ml-px shrink-0" aria-hidden="true"><path d="M0 0h7L3.500 4z" fill="#222" /></svg>
        </button>
        <div className="min-w-0 flex-1">
          <TitleBar />
          <RibbonTabs />
        </div>
      </div>
      <Ribbon />
      <FileTabs />
      <Canvas />
      <StatusBar />
    </div>
  );
}
